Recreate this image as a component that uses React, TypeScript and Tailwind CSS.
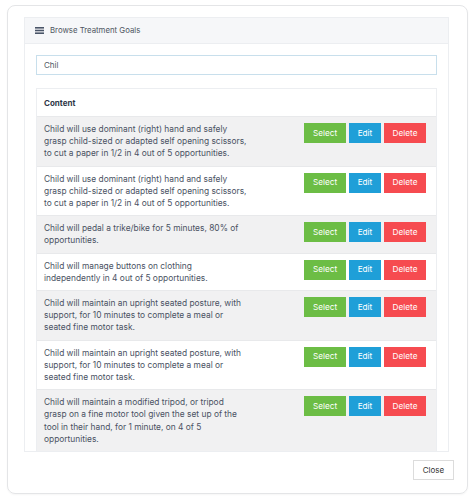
import React from 'react';

// each goal is split the way the reference wraps it
const goals: string[][] = [
  [
    'Child will use dominant (right) hand and safely',
    'grasp child-sized or adapted self opening scissors,',
    'to cut a paper in 1/2 in 4 out of 5 opportunities.',
  ],
  [
    'Child will use dominant (right) hand and safely',
    'grasp child-sized or adapted self opening scissors,',
    'to cut a paper in 1/2 in 4 out of 5 opportunities.',
  ],
  ['Child will pedal a trike/bike for 5 minutes, 80% of', 'opportunities.'],
  ['Child will manage buttons on clothing', 'independently in 4 out of 5 opportunities.'],
  [
    'Child will maintain an upright seated posture, with',
    'support, for 10 minutes to complete a meal or',
    'seated fine motor task.',
  ],
  [
    'Child will maintain an upright seated posture, with',
    'support, for 10 minutes to complete a meal or',
    'seated fine motor task.',
  ],
  [
    'Child will maintain a modified tripod, or tripod',
    'grasp on a fine motor tool given the set up of the',
    'tool in their hand, for 1 minute, on 4 of 5',
    'opportunities.',
  ],
];

const BarsIcon = () => (
  <svg width="9" height="7" viewBox="0 0 9 7" className="shrink-0">
    <rect x="0" y="0" width="9" height="1.6" fill="#4a5568" />
    <rect x="0" y="2.7" width="9" height="1.6" fill="#4a5568" />
    <rect x="0" y="5.4" width="9" height="1.6" fill="#4a5568" />
  </svg>
);

export default function App() {
  return (
    <div className="w-[474px] h-[499px] bg-white pt-[5px] pl-[7px] font-['Inter',sans-serif]">
      <div className="w-[461px] h-[489px] border border-[#e4e5e7] rounded-[8px] pl-[16px] pt-[11px] pr-[13px] flex flex-col shadow-[0_1px_2px_rgba(0,0,0,0.04)]">
        {/* panel */}
        <div className="w-[425px] h-[435px] border border-[#eceef1] flex flex-col overflow-hidden">
          <div className="h-[26px] shrink-0 bg-[#f6f7f9] border-b border-[#eceef1] flex items-center gap-[6px] pl-[10px] text-[7.8px] text-[#4f5662]">
            <BarsIcon />
            <span>Browse Treatment Goals</span>
          </div>
          <div className="flex-1 overflow-hidden pl-[11px] pr-[11px] pt-[11px]">
            <div className="h-[20px] border border-[#c8dfec] flex items-center px-[7px] text-[8px] text-[#4f5662]">
              Chil
            </div>
            <div className="mt-[13px] border border-[#eceef1] border-b-0">
              <div className="h-[27px] flex items-center pl-[7px] text-[8px] font-bold text-[#2f3747]">
                Content
              </div>
              {goals.map((lines, i) => (
                <div
                  key={i}
                  className={`flex border-t border-[#e8e9eb] ${i % 2 === 0 ? 'bg-[#f1f1f2]' : 'bg-white'}`}
                >
                  <div className="w-[199px] shrink-0 pl-[7px] pt-[6px] pb-[6px] text-[8.4px] leading-[12.2px] text-[#4a5263] whitespace-nowrap">
                    {lines.map((l, j) => (
                      <div key={j}>{l}</div>
                    ))}
                  </div>
                  <div className="flex-1 flex justify-end items-start gap-[3px] pr-[10px] pt-[6px]">
                    <button className="w-[42px] h-[20px] bg-[#6cbd45] text-white text-[8.2px]">Select</button>
                    <button className="w-[32px] h-[20px] bg-[#1f9fd8] text-white text-[8.2px]">Edit</button>
                    <button className="w-[42px] h-[20px] bg-[#f64b50] text-white text-[8.2px]">Delete</button>
                  </div>
                </div>
              ))}
            </div>
          </div>
        </div>
        <div className="flex justify-end mt-[8px]">
          <button className="w-[41px] h-[20px] border border-[#dcdcdc] bg-white text-[8px] text-[#333]">Close</button>
        </div>
      </div>
    </div>
  );
}
